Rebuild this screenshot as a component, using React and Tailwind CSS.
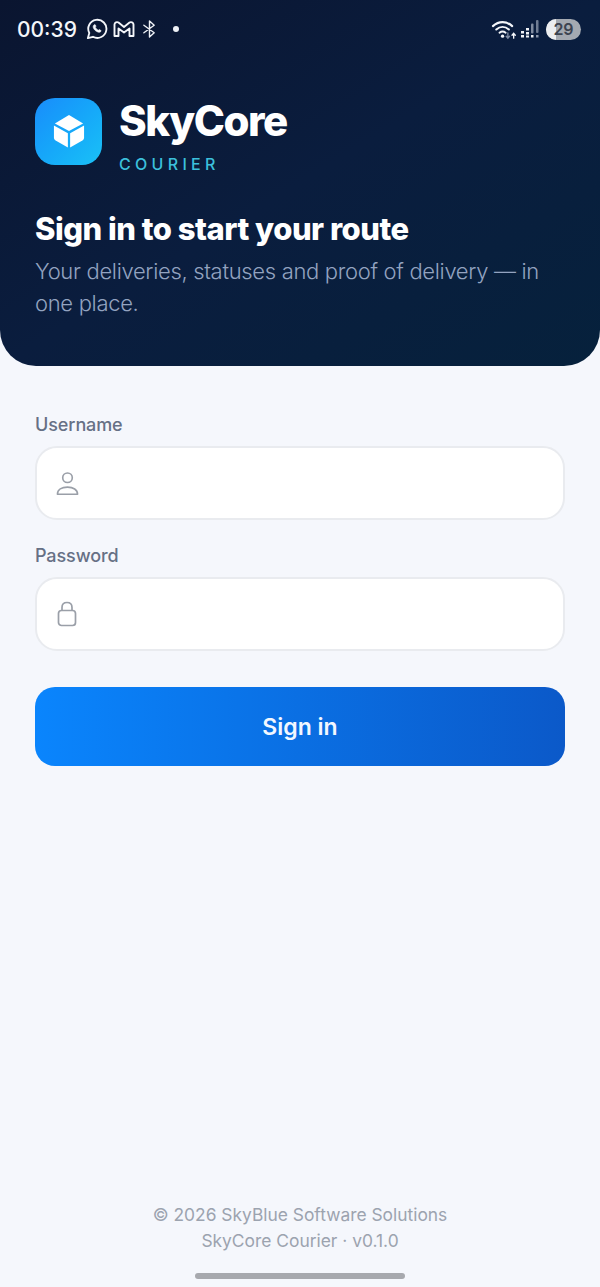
import React from "react";

function Whatsapp() {
  return (
    <svg width="22" height="22" viewBox="0 0 24 24" fill="none" stroke="#f4f6fa" strokeWidth="2" strokeLinejoin="round">
      <path d="M2 22l1.600-5.600A9.900 9.900 0 1 1 7.600 20.500z" />
      <path d="M8.600 7.600c.9-1 1.500-.6 2 .7.3.8.3 1-.4 1.700.6 1.400 1.800 2.600 3.300 3.300.7-.8 1-.8 1.700-.4 1.300.6 1.600 1 .8 2-1 1.100-3 .8-5.300-.8-2.200-1.600-4-4.700-2.100-6.500z" fill="#f4f6fa" strokeWidth="0.6" />
    </svg>
  );
}

function Gmail() {
  return (
    <svg width="22" height="20" viewBox="0 0 22 20" fill="none" stroke="#f4f6fa" strokeWidth="1.900" strokeLinejoin="round" strokeLinecap="round">
      <path d="M1.500 5.500V17H5.500V9.500L11 13.500L16.500 9.500V17H20.500V5.500C20.500 3.500 18 2.500 16.500 3.600L11 8L5.500 3.600C4 2.500 1.500 3.500 1.500 5.500Z" />
    </svg>
  );
}

function Bluetooth() {
  return (
    <svg width="15" height="20" viewBox="0 0 16 20" fill="none" stroke="#eef1f6" strokeWidth="1.500" strokeLinejoin="round" strokeLinecap="round">
      <path d="M2 6l11 8-5 4.500V1.500L13 6 2 14" />
    </svg>
  );
}

function Wifi() {
  return (
    <svg width="27" height="22" viewBox="0 0 28 22" fill="none" strokeLinecap="round">
      <path d="M2 8C8 2.500 16 2.500 22 8" stroke="#f4f6fa" strokeWidth="2.200" />
      <path d="M5.500 11.500C9.500 8 14.500 8 18.500 11.500" stroke="#f4f6fa" strokeWidth="2.200" />
      <path d="M8.800 14.800C10.800 13.200 13.200 13.200 15.200 14.800" stroke="#f4f6fa" strokeWidth="2" />
      <circle cx="12" cy="18.500" r="1.700" fill="#f4f6fa" />
      <path d="M17.500 15V20M15.800 18.500L17.500 20.500L19.200 18.500" stroke="#7e8ba3" strokeWidth="1.400" />
      <path d="M23.500 20.500V15.500M21.800 17.500L23.500 15.500L25.200 17.500" stroke="#f4f6fa" strokeWidth="1.400" />
    </svg>
  );
}

function Signal() {
  return (
    <svg width="18" height="20" viewBox="0 0 18 20">
      <rect x="0" y="12" width="3" height="2.500" fill="#eef1f6" />
      <rect x="0" y="16" width="3" height="2.500" fill="#eef1f6" />
      <rect x="5" y="9" width="3" height="2.500" fill="#eef1f6" />
      <rect x="5" y="13" width="3" height="2.500" fill="#eef1f6" />
      <rect x="5" y="16.500" width="3" height="2" fill="#eef1f6" />
      <rect x="10" y="4.500" width="2.500" height="10" rx="1" fill="#7f8ba0" />
      <rect x="10" y="16" width="2.500" height="2.500" fill="#eef1f6" />
      <rect x="15" y="1" width="2.500" height="13" rx="1" fill="#6f7c93" />
      <rect x="15" y="16" width="2.500" height="2.500" fill="#8a96aa" />
    </svg>
  );
}

function Battery() {
  return (
    <div className="relative flex h-[21px] w-[35px] items-center justify-center overflow-hidden rounded-full bg-[#a4a9b1]">
      <div className="absolute inset-y-0 left-0 w-[10px] bg-[#eceef1]" />
      <span className="relative text-[16px] font-semibold leading-none text-[#3c4350]">29</span>
    </div>
  );
}

function Cube() {
  return (
    <svg width="32" height="34" viewBox="0 0 34 34" preserveAspectRatio="none" fill="#fff" className="mb-[2px]">
      <path d="M17 1L32 9.500L17 17L2 9.500Z" />
      <path d="M1 11.500L15.800 19.300V33.500L2.800 26.500C1.700 25.900 1 24.800 1 23.500Z" />
      <path d="M33 11.500L18.200 19.300V33.500L31.200 26.500C32.300 25.900 33 24.800 33 23.500Z" />
    </svg>
  );
}

function UserIcon() {
  return (
    <svg width="23" height="25" viewBox="0 0 24 26" fill="none" stroke="#9a9fa8" strokeWidth="1.700">
      <circle cx="12" cy="7" r="5" />
      <path d="M1.500 24.200C1.500 19.500 6 16.800 12 16.800C18 16.800 22.500 19.500 22.500 24.200Z" strokeLinejoin="round" />
    </svg>
  );
}

function LockIcon() {
  return (
    <svg width="20" height="26" viewBox="0 0 20 26" fill="none" stroke="#9a9fa8" strokeWidth="1.700">
      <rect x="1.500" y="9.500" width="17" height="15" rx="3" />
      <path d="M5 9.500V6.500C5 3.500 7 1.500 10 1.500C13 1.500 15 3.500 15 6.500V9.500" />
    </svg>
  );
}

function Field({ label, icon, className = "" }) {
  return (
    <div className={`flex flex-col ${className}`}>
      <label className="h-[26px] text-[18px] font-[450] leading-[26px] tracking-[-0.100px] text-[#667085]">{label}</label>
      <div className="mt-[8px] flex h-[74px] items-center rounded-[22px] border-2 border-[#e9ebef] bg-white pl-[18px]">
        <span className="flex w-[24px] justify-center">{icon}</span>
      </div>
    </div>
  );
}

export default function App() {
  return (
    <div
      className="flex min-h-[1287px] flex-col bg-[#f5f7fc]"
      style={{ fontFamily: "Inter, 'Open Sans', sans-serif" }}
    >
      <header className="flex h-[366px] flex-col rounded-b-[36px] bg-gradient-to-br from-[#0a1530] via-[#0a1d3e] to-[#06213c] px-[35px]">
        <div className="-mx-[18px] flex h-[58px] items-center justify-between pr-[2px]">
          <div className="flex items-center">
            <span className="text-[21px] font-medium leading-none text-[#f4f6fa]">00:39</span>
            <span className="ml-[9px] flex items-center gap-[5px]">
              <Whatsapp />
              <Gmail />
            </span>
            <span className="ml-[7px]"><Bluetooth /></span>
            <span className="ml-[16px] h-[6px] w-[6px] rounded-full bg-[#eef1f6]" />
          </div>
          <div className="flex items-center gap-[3px]">
            <Wifi />
            <Signal />
            <span className="ml-[4px]"><Battery /></span>
          </div>
        </div>

        <div className="mt-[40px] flex items-start">
          <div className="flex h-[67px] w-[67px] items-center justify-center rounded-[20px] bg-gradient-to-br from-[#1a8cfb] to-[#1bc1f6]">
            <Cube />
          </div>
          <div className="ml-[17px] flex flex-col">
            <span className="mt-[-1px] text-[42px] font-extrabold leading-[48px] tracking-[-1.450px] text-white">SkyCore</span>
            <span className="mt-[9px] text-[16px] font-medium leading-[20px] tracking-[4.300px] text-[#3cc0dc]">COURIER</span>
          </div>
        </div>

        <h1 className="mt-[34px] text-[31px] font-extrabold leading-[42px] tracking-[-0.500px] text-white">Sign in to start your route</h1>
        <p className="mt-[5px] text-[22px] font-light leading-[32px] tracking-[-0.320px] text-[#93a3c0]">
          Your deliveries, statuses and proof of delivery — in one place.
        </p>
      </header>

      <main className="flex flex-1 flex-col px-[35px] pt-[46px]">
        <Field label="Username" icon={<UserIcon />} />
        <Field label="Password" icon={<LockIcon />} className="mt-[23px]" />
        <button className="mt-[36px] flex h-[79px] items-center justify-center rounded-[20px] bg-gradient-to-r from-[#0a85fd] to-[#0b59c9] pt-[2px] text-[23px] font-semibold text-[#f2f7ff]">
          Sign in
        </button>

        <footer className="mt-auto flex flex-col items-center text-[17.400px] leading-[26px] text-[#9ca3af]">
          <span>© 2026 SkyBlue Software Solutions</span>
          <span>SkyCore Courier · v0.1.0</span>
        </footer>
        <div className="mb-[8px] mt-[19px] flex justify-center">
          <div className="h-[6px] w-[210px] rounded-full bg-[#a7a9ae]" />
        </div>
      </main>
    </div>
  );
}
